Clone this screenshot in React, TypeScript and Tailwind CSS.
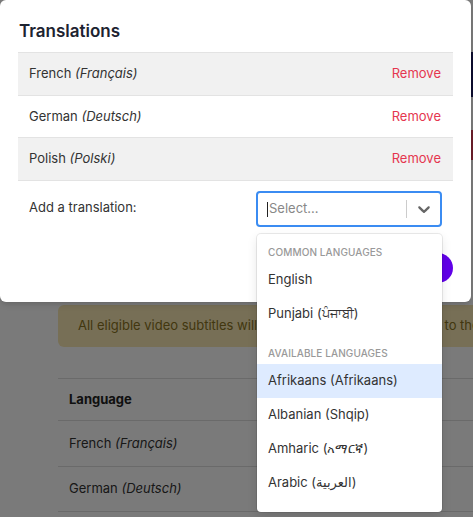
import React from "react";

const font = { fontFamily: "Inter, 'Noto Sans', 'DejaVu Sans', sans-serif" };

const rows = [
  { name: "French", native: "Français", shaded: true, h: "h-[43px]" },
  { name: "German", native: "Deutsch", shaded: false, h: "h-[42px]" },
  { name: "Polish", native: "Polski", shaded: true, h: "h-[43px]" },
];

const ChevronDown = () => (
  <svg width="20" height="20" viewBox="0 0 20 20" fill="#666">
    <path d="M4.516 7.548c.436-.446 1.043-.481 1.576 0L10 11.295l3.908-3.747c.533-.481 1.141-.446 1.574 0 .436.445.408 1.197 0 1.615-.406.418-4.695 4.502-4.695 4.502a1.095 1.095 0 0 1-1.576 0S4.924 9.581 4.516 9.163c-.409-.418-.436-1.17 0-1.615z" />
  </svg>
);

function BackgroundPage() {
  return (
    <div className="flex flex-col pl-[58px] text-[13px] text-[#333]">
      <div className="flex h-[305px] flex-col items-end">
        <div className="mt-[52px] h-[45px] w-[2px] bg-[#1c1c60]" />
        <div className="mt-[33px] h-[30px] w-[2px] bg-[#e0405a]" />
      </div>
      <div className="flex h-[42px] items-center whitespace-nowrap rounded-l-md bg-[#f8e9b4] pl-5 text-[#8a7322]">
        All eligible video subtitles will be auto-translated and saved to the selected languages.
      </div>
      <div className="mt-[31px] border-t border-[#ddd]">
        <div className="flex h-[42px] items-center border-b border-[#ddd] px-[11px] font-bold text-[#222]">Language</div>
        <div className="flex h-[46px] items-center border-b border-[#ddd] px-[11px]">
          French&nbsp;<i>(Français)</i>
        </div>
        <div className="flex h-[45px] items-center border-b border-[#ddd] px-[11px]">
          German&nbsp;<i>(Deutsch)</i>
        </div>
      </div>
    </div>
  );
}

function Option({ label, active }: { label: string; active?: boolean }) {
  return (
    <div className={`flex h-[34px] items-center px-[11px] text-[13px] text-[#333] ${active ? "bg-[#deebff]" : ""}`}>
      {label}
    </div>
  );
}

function GroupHeading({ label }: { label: string }) {
  return (
    <div className="mb-[5px] flex h-[12px] items-center px-[11px] text-[10px] font-medium uppercase tracking-[0.01em] text-[#999]">
      {label}
    </div>
  );
}

export default function App() {
  return (
    <div className="relative h-[517px] w-[473px] overflow-hidden bg-white" style={font}>
      <BackgroundPage />
      <div className="absolute inset-0 bg-black/[0.52]" />

      {/* Modal */}
      <div className="absolute left-0 top-0 flex h-[302px] w-[471px] flex-col rounded-md bg-white px-[18px] pt-5 shadow-md">
        <h2 className="flex h-6 items-center pl-px text-[17px] font-semibold text-[#1d2330]">Translations</h2>
        <div className="mt-2 border-t border-[#e3e3e3]">
          {rows.map((r) => (
            <div
              key={r.name}
              className={`flex ${r.h} items-center justify-between border-b border-[#e3e3e3] pl-[11px] pr-3 text-[13px] text-[#333] ${r.shaded ? "bg-[#f1f1f1]" : "bg-white"}`}
            >
              <span>
                {r.name} <i>({r.native})</i>
              </span>
              <span className="text-[#e5364f]">Remove</span>
            </div>
          ))}
        </div>
        <div className="mt-[10px] flex items-center justify-between pl-[11px] pr-[11px]">
          <span className="-mt-[2px] text-[13px] text-[#333]">Add a translation:</span>
          <div className="flex h-[36px] w-[186px] items-center rounded border-2 border-[#3b8cf2] bg-white">
            <div className="flex flex-1 items-center pl-[9px] text-[13px] text-[#888]">
              <span className="mr-px h-[15px] w-px bg-[#222]" />
              Select...
            </div>
            <span className="h-[18px] w-px bg-[#ccc]" />
            <div className="flex w-[33px] items-center justify-center">
              <ChevronDown />
            </div>
          </div>
        </div>
        <div className="mt-[26px] flex justify-end">
          <div className="h-[30px] w-[90px] rounded-full bg-[#6100e8]" />
        </div>
      </div>

      {/* Open select menu */}
      <div className="absolute left-[257px] top-[234px] w-[185px] rounded bg-white py-1 shadow-[0_0_0_1px_rgba(0,0,0,0.08),0_4px_11px_rgba(0,0,0,0.1)]">
        <div className="py-2">
          <GroupHeading label="Common languages" />
          <Option label="English" />
          <Option label="Punjabi (ਪੰਜਾਬੀ)" />
        </div>
        <div className="py-2">
          <GroupHeading label="Available languages" />
          <Option label="Afrikaans (Afrikaans)" active />
          <Option label="Albanian (Shqip)" />
          <Option label="Amharic (አማርኛ)" />
          <Option label="Arabic (العربية)" />
        </div>
      </div>
    </div>
  );
}
